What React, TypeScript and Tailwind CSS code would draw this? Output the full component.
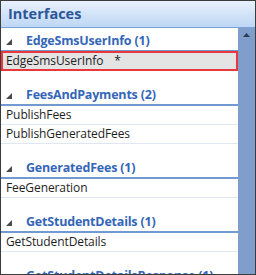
const groups = [
  { name: 'EdgeSmsUserInfo', items: ['EdgeSmsUserInfo'] },
  { name: 'FeesAndPayments', items: ['PublishFees', 'PublishGeneratedFees'] },
  { name: 'GeneratedFees', items: ['FeeGeneration'] },
  { name: 'GetStudentDetails', items: ['GetStudentDetails'] },
  { name: 'GetStudentDetailsResponse', items: ['GetStudentDetailsResponse'] },
]

function Expander() {
  return (
    <svg width="6" height="6" viewBox="0 0 6 6" className="shrink-0">
      <polygon points="6,0 6,6 0,6" fill="#4a4a4a" />
    </svg>
  )
}

export default function App() {
  return (
    <div
      className="w-[256px] h-[275px] border border-[#3c3c3c] flex flex-col overflow-hidden bg-white"
      style={{ fontFamily: '"Open Sans", "Noto Sans", sans-serif' }}
    >
      {/* Header */}
      <div className="h-[27px] shrink-0 bg-gradient-to-b from-[#e8f1fc] to-[#bed6f5] border-b border-[#80a4d2] pl-[7px] flex items-center text-[14.5px] font-bold text-[#2b5797]">
        Interfaces
      </div>

      <div className="flex flex-1 min-h-0">
        {/* List */}
        <div className="flex-1 overflow-hidden pt-[6px]">
          {groups.map((g, gi) => (
            <div key={g.name} className={gi > 0 ? 'mt-[17px]' : ''}>
              <div className="h-[18px] border-b-2 border-[#7399d3] flex items-center gap-[14px] pl-[5px] pb-[1px] text-[12.5px] tracking-[-0.2px] font-bold text-[#3466b8] whitespace-nowrap leading-none">
                <Expander />
                <span>
                  {g.name} ({g.items.length})
                </span>
              </div>
              {g.items.map((item, ii) => {
                const selected = gi === 0 && ii === 0
                return selected ? (
                  <div
                    key={item}
                    className="h-[20px] -mt-px bg-[#e4e4e4] border-2 border-[#e8383b] flex items-center pl-[3px] text-[12px] tracking-[-0.1px] text-[#1e1e1e] whitespace-nowrap leading-none"
                  >
                    {item}
                    <span className="ml-[11px]">*</span>
                  </div>
                ) : (
                  <div
                    key={item}
                    className="h-[19px] border-b border-[#dfe7f3] flex items-center pl-[5px] text-[12px] tracking-[-0.1px] text-[#1e1e1e] whitespace-nowrap leading-none"
                  >
                    {item}
                  </div>
                )
              })}
            </div>
          ))}
        </div>

        {/* Scrollbar */}
        <div className="w-[17px] shrink-0 bg-[#7f9ecb] flex justify-center pt-[5px]">
          <svg width="7" height="4" viewBox="0 0 7 4">
            <polygon points="3.5,0 7,4 0,4" fill="#2e3c52" />
          </svg>
        </div>
      </div>
    </div>
  )
}
